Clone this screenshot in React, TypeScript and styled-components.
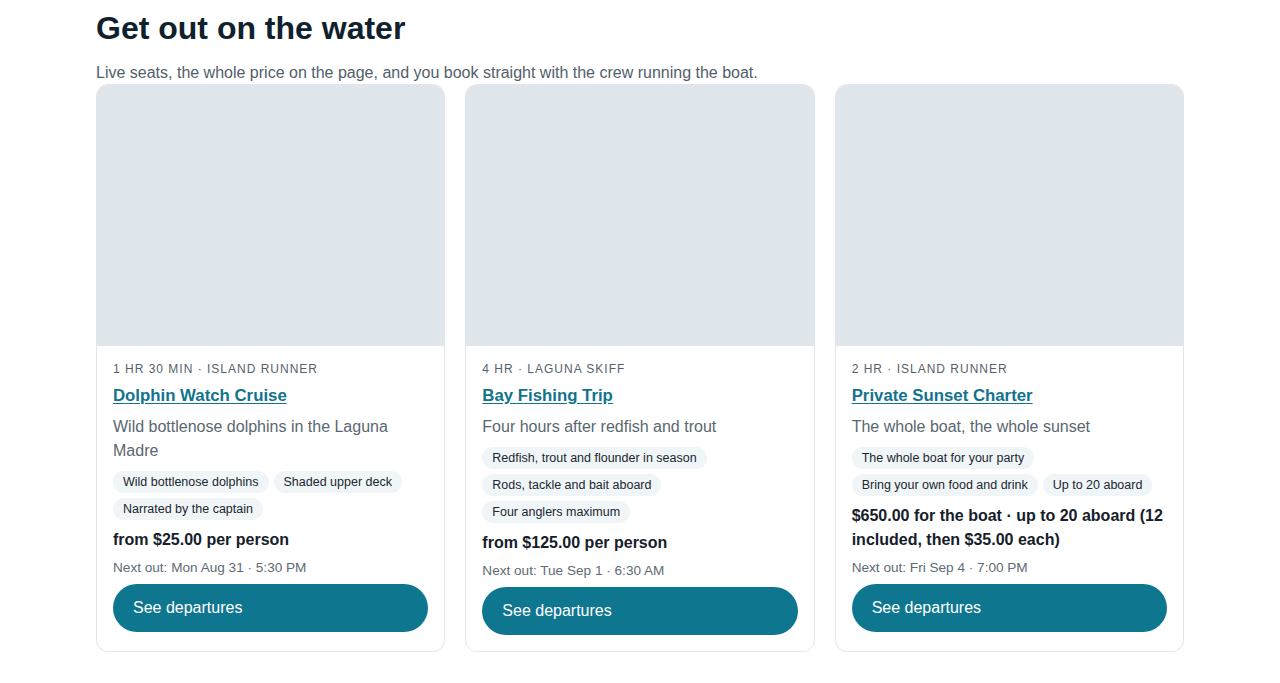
import React from 'react';
import styled, { createGlobalStyle } from 'styled-components';

const GlobalStyle = createGlobalStyle`
  body {
    margin: 0;
    background: #ffffff;
    font-family: "Liberation Sans", Arial, sans-serif;
  }
`;

type Trip = {
  meta: string;
  title: string;
  blurb: string;
  perks: string[];
  price: string;
  next: string;
};

const trips: Trip[] = [
  {
    meta: '1 hr 30 min · Island Runner',
    title: 'Dolphin Watch Cruise',
    blurb: 'Wild bottlenose dolphins in the Laguna Madre',
    perks: ['Wild bottlenose dolphins', 'Shaded upper deck', 'Narrated by the captain'],
    price: 'from $25.00 per person',
    next: 'Next out: Mon Aug 31 · 5:30 PM',
  },
  {
    meta: '4 hr · Laguna Skiff',
    title: 'Bay Fishing Trip',
    blurb: 'Four hours after redfish and trout',
    perks: ['Redfish, trout and flounder in season', 'Rods, tackle and bait aboard', 'Four anglers maximum'],
    price: 'from $125.00 per person',
    next: 'Next out: Tue Sep 1 · 6:30 AM',
  },
  {
    meta: '2 hr · Island Runner',
    title: 'Private Sunset Charter',
    blurb: 'The whole boat, the whole sunset',
    perks: ['The whole boat for your party', 'Bring your own food and drink', 'Up to 20 aboard'],
    price: '$650.00 for the boat · up to 20 aboard (12 included, then $35.00 each)',
    next: 'Next out: Fri Sep 4 · 7:00 PM',
  },
];

const App = () => {
  return (
    <>
      <GlobalStyle />
      <Page>
        <Heading>Get out on the water</Heading>
        <Lead>Live seats, the whole price on the page, and you book straight with the crew running the boat.</Lead>
        <Grid>
          {trips.map((trip) => (
            <Card key={trip.title}>
              <Photo />
              <Body>
                <Meta>{trip.meta}</Meta>
                <Title href="#">{trip.title}</Title>
                <Blurb>{trip.blurb}</Blurb>
                <Perks>
                  {trip.perks.map((p) => (
                    <Perk key={p}>{p}</Perk>
                  ))}
                </Perks>
                <Price>{trip.price}</Price>
                <NextOut>{trip.next}</NextOut>
                <Button>See departures</Button>
              </Body>
            </Card>
          ))}
        </Grid>
      </Page>
    </>
  );
};

export default App;

const Page = styled.main`
  max-width: 1088px;
  margin: 0 auto;
  padding-top: 9px;
`;

const Heading = styled.h1`
  margin: 0;
  font-size: 32px;
  line-height: 38px;
  font-weight: 700;
  color: #10212e;
`;

const Lead = styled.p`
  margin: 14px 0 0;
  font-size: 16px;
  line-height: 23px;
  color: #52606b;
`;

const Grid = styled.div`
  display: grid;
  grid-template-columns: repeat(3, 1fr);
  gap: 20px;
`;

const Card = styled.article`
  background: #ffffff;
  border: 1px solid #e1e6ea;
  border-radius: 12px;
  overflow: hidden;
  display: flex;
  flex-direction: column;
`;

const Photo = styled.div`
  height: 261px;
  background: #dfe6ec;
`;

const Body = styled.div`
  padding: 16px;
  display: flex;
  flex-direction: column;
  align-items: flex-start;
`;

const Meta = styled.div`
  font-size: 12px;
  line-height: 14px;
  letter-spacing: 1px;
  text-transform: uppercase;
  color: #55626c;
`;

const Title = styled.a`
  margin-top: 8px;
  font-size: 16.8px;
  line-height: 24px;
  font-weight: 700;
  color: #12738c;
  text-decoration: underline;
  text-underline-offset: 2px;
`;

const Blurb = styled.p`
  margin: 7px 0 0;
  font-size: 16px;
  line-height: 24px;
  color: #5a6771;
`;

const Perks = styled.div`
  margin-top: 8px;
  display: flex;
  flex-wrap: wrap;
  gap: 5px 5px;
`;

const Perk = styled.span`
  padding: 3px 10px;
  font-size: 12.5px;
  line-height: 16px;
  color: #1b2630;
  background: #f0f5f7;
  border-radius: 999px;
`;

const Price = styled.div`
  margin-top: 8px;
  font-size: 16px;
  line-height: 24px;
  font-weight: 700;
  color: #15202a;
`;

const NextOut = styled.div`
  margin-top: 8px;
  font-size: 13.6px;
  line-height: 16px;
  color: #5f6b74;
`;

const Button = styled.button`
  margin-top: 8px;
  width: 100%;
  height: 48px;
  padding: 0 20px;
  border: none;
  border-radius: 24px;
  background: #0f7690;
  color: #ffffff;
  font-family: inherit;
  font-size: 16px;
  text-align: left;
  cursor: pointer;
`;
